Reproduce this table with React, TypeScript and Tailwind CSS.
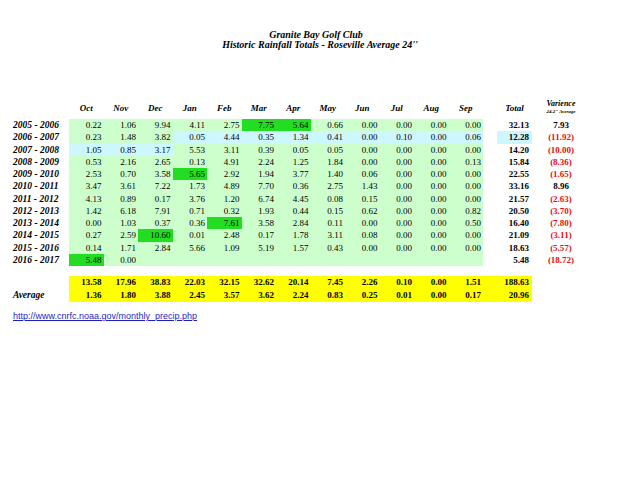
const COLS = "grid grid-cols-[69px_repeat(12,34.5px)_14px_35px_58px]";
const MONTHS = ["Oct", "Nov", "Dec", "Jan", "Feb", "Mar", "Apr", "May", "Jun", "Jul", "Aug", "Sep"];

type Row = {label: string; vals: string[]; total: string; varience: string; hi?: number[]; blue?: number[]; totalBlue?: boolean};

const ROWS: Row[] = [
  {label: "2005 - 2006", vals: ["0.22", "1.06", "9.94", "4.11", "2.75", "7.75", "5.64", "0.66", "0.00", "0.00", "0.00", "0.00"], total: "32.13", varience: "7.93", hi: [5, 6]},
  {label: "2006 - 2007", vals: ["0.23", "1.48", "3.82", "0.05", "4.44", "0.35", "1.34", "0.41", "0.00", "0.10", "0.00", "0.06"], total: "12.28", varience: "(11.92)", blue: [3, 4, 5, 6, 7, 8, 9, 10, 11], totalBlue: true},
  {label: "2007 - 2008", vals: ["1.05", "0.85", "3.17", "5.53", "3.11", "0.39", "0.05", "0.05", "0.00", "0.00", "0.00", "0.00"], total: "14.20", varience: "(10.00)", blue: [0, 1, 2]},
  {label: "2008 - 2009", vals: ["0.53", "2.16", "2.65", "0.13", "4.91", "2.24", "1.25", "1.84", "0.00", "0.00", "0.00", "0.13"], total: "15.84", varience: "(8.36)"},
  {label: "2009 - 2010", vals: ["2.53", "0.70", "3.58", "5.65", "2.92", "1.94", "3.77", "1.40", "0.06", "0.00", "0.00", "0.00"], total: "22.55", varience: "(1.65)", hi: [3]},
  {label: "2010 - 2011", vals: ["3.47", "3.61", "7.22", "1.73", "4.89", "7.70", "0.36", "2.75", "1.43", "0.00", "0.00", "0.00"], total: "33.16", varience: "8.96"},
  {label: "2011 - 2012", vals: ["4.13", "0.89", "0.17", "3.76", "1.20", "6.74", "4.45", "0.08", "0.15", "0.00", "0.00", "0.00"], total: "21.57", varience: "(2.63)"},
  {label: "2012 - 2013", vals: ["1.42", "6.18", "7.91", "0.71", "0.32", "1.93", "0.44", "0.15", "0.62", "0.00", "0.00", "0.82"], total: "20.50", varience: "(3.70)"},
  {label: "2013 - 2014", vals: ["0.00", "1.03", "0.37", "0.36", "7.61", "3.58", "2.84", "0.11", "0.00", "0.00", "0.00", "0.50"], total: "16.40", varience: "(7.80)", hi: [4]},
  {label: "2014 - 2015", vals: ["0.27", "2.59", "10.60", "0.01", "2.48", "0.17", "1.78", "3.11", "0.08", "0.00", "0.00", "0.00"], total: "21.09", varience: "(3.11)", hi: [2]},
  {label: "2015 - 2016", vals: ["0.14", "1.71", "2.84", "5.66", "1.09", "5.19", "1.57", "0.43", "0.00", "0.00", "0.00", "0.00"], total: "18.63", varience: "(5.57)"},
  {label: "2016 - 2017", vals: ["5.48", "0.00", "", "", "", "", "", "", "", "", "", ""], total: "5.48", varience: "(18.72)", hi: [0]},
];

const TOTALS = ["13.58", "17.96", "38.83", "22.03", "32.15", "32.62", "20.14", "7.45", "2.26", "0.10", "0.00", "1.51"];
const AVERAGES = ["1.36", "1.80", "3.88", "2.45", "3.57", "3.62", "2.24", "0.83", "0.25", "0.01", "0.00", "0.17"];

export default function App() {
  return (
    <div className="h-[495px] w-[640px] bg-white font-['Liberation_Serif',serif] text-black">
      {/* Title */}
      <div className="pt-[30px] text-center text-[10px] font-bold italic leading-[9.5px]">
        <div className="pr-[8px]">Granite Bay Golf Club</div>
        <div>Historic Rainfall Totals - Roseville Average 24''</div>
      </div>

      {/* Header */}
      <div className={`${COLS} mt-[46px] h-[24px] items-center text-[9px] font-bold italic`}>
        <div />
        {MONTHS.map((m) => (
          <div key={m} className="pt-[3px] text-center">{m}</div>
        ))}
        <div />
        <div className="pt-[3px] text-center">Total</div>
        <div className="flex flex-col items-center pt-[1px]">
          <span className="text-[8px] leading-[9px]">Varience</span>
          <span className="text-[5px] leading-[8px]">24.2" Average</span>
        </div>
      </div>

      {/* Data rows */}
      {ROWS.map((r) => (
        <div key={r.label} className={`${COLS} h-[12.25px] items-center text-[9px] leading-[12.25px]`}>
          <div className="pl-[13px] text-[9.5px] font-bold italic">{r.label}</div>
          {r.vals.map((v, i) => (
            <div
              key={i}
              className={[
                "h-full pr-[2px] text-right",
                r.hi?.includes(i) ? "bg-[#22dd22]" : r.blue?.includes(i) ? "bg-[#ccf7ff]" : "bg-[#ccffcc]",
              ].join(" ")}
            >
              {v}
            </div>
          ))}
          <div />
          <div className={["h-full pr-[3px] text-right font-bold", r.totalBlue ? "bg-[#ccf7ff]" : ""].join(" ")}>{r.total}</div>
          <div className={["text-center font-bold", r.varience.startsWith("(") ? "text-[#e01010]" : ""].join(" ")}>{r.varience}</div>
        </div>
      ))}

      {/* Totals / averages */}
      <div className="mt-[10px]">
        <SumRow label="" vals={TOTALS} total="188.63" />
        <SumRow label="Average" vals={AVERAGES} total="20.96" />
      </div>

      <div className="mt-[9px] pl-[13px] font-['Liberation_Sans',Arial,sans-serif] text-[9px] leading-[11px]">
        <span className="text-[#1f1fbf] underline">http://www.cnrfc.noaa.gov/monthly_precip.php</span>
      </div>
    </div>
  );
}

function SumRow({label, vals, total}: {label: string; vals: string[]; total: string}) {
  return (
    <div className={`${COLS} h-[13px] items-center text-[9px] font-bold leading-[13px]`}>
      <div className="pl-[13px] text-[9.5px] italic">{label}</div>
      {vals.map((v, i) => (
        <div key={i} className="h-full bg-[#ffff00] pr-[2px] text-right">{v}</div>
      ))}
      <div className="h-full bg-[#ffff00]" />
      <div className="h-full bg-[#ffff00] pr-[3px] text-right">{total}</div>
      <div />
    </div>
  );
}
